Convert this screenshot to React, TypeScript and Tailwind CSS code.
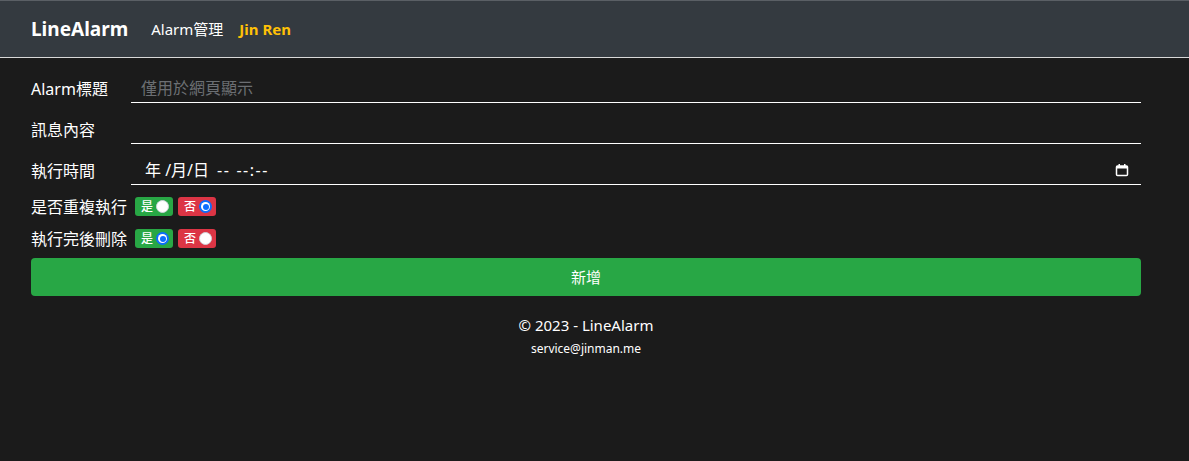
import { useState } from 'react';

const font = { fontFamily: '"Noto Sans", "Noto Sans CJK TC", sans-serif' };

function Radio({ checked }: { checked: boolean }) {
  return checked ? (
    <span className="w-[13px] h-[13px] rounded-full bg-[#0d6efd] flex items-center justify-center">
      <span className="w-[9px] h-[9px] rounded-full bg-white flex items-center justify-center">
        <span className="w-[6px] h-[6px] rounded-full bg-[#0d6efd]" />
      </span>
    </span>
  ) : (
    <span className="w-[13px] h-[13px] rounded-full bg-white border border-gray-300" />
  );
}

function Choice({ label, color, checked, onClick }: { label: string; color: string; checked: boolean; onClick: () => void }) {
  return (
    <button
      onClick={onClick}
      className={`${color} h-[19px] w-[38px] rounded-[3px] flex items-center gap-[3px] pl-[6px] text-white text-[12px] font-medium leading-none`}
    >
      {label}
      <Radio checked={checked} />
    </button>
  );
}

function Toggle({ label, value, onChange }: { label: string; value: boolean; onChange: (v: boolean) => void }) {
  return (
    <div className="flex items-center h-[21px]">
      <span className="text-[16px] text-white mr-[8px]">{label}</span>
      <div className="flex gap-[5px]">
        <Choice label="是" color="bg-[#28a745]" checked={value} onClick={() => onChange(true)} />
        <Choice label="否" color="bg-[#dc3545]" checked={!value} onClick={() => onChange(false)} />
      </div>
    </div>
  );
}

export default function App() {
  const [repeat, setRepeat] = useState(false);
  const [remove, setRemove] = useState(true);

  return (
    <div className="min-h-[461px] bg-[#1b1b1b] text-white" style={font}>
      {/* Navbar */}
      <nav className="h-[58px] bg-[#343a40] border-t border-[#5a5f65] border-b border-b-[#d8d8d8] flex items-center px-[31px]">
        <span className="text-[19px] font-bold text-white mr-[23px]">LineAlarm</span>
        <span className="text-[15px] text-white mr-[16px]">Alarm管理</span>
        <span className="text-[15px] font-bold text-[#ffc107]">Jin Ren</span>
      </nav>

      <div className="w-[1172px]">
        {/* Form */}
        <div className="px-[31px] pt-[17px]">
          <div className="flex items-center h-[28px]">
            <span className="w-[100px] text-[16px]">Alarm標題</span>
            <input
              placeholder="僅用於網頁顯示"
              className="flex-1 bg-transparent border-b border-white h-full outline-none text-[16px] px-[10px] pb-[2px] placeholder:text-[#6c6f73]"
            />
          </div>
          <div className="flex items-center h-[29px] mt-[12px]">
            <span className="w-[100px] text-[16px]">訊息內容</span>
            <input className="flex-1 bg-transparent border-b border-white h-full outline-none text-[16px] px-[10px]" />
          </div>
          <div className="flex items-center h-[29px] mt-[12px]">
            <span className="w-[100px] text-[16px]">執行時間</span>
            <div className="flex-1 border-b border-white h-full flex items-center justify-between pl-[14px] pr-[12px] text-[16px]">
              <span className="flex items-center">
                年 /月/日
                <span className="ml-[8px] tracking-[1.5px]">--</span>
                <span className="ml-[6px] tracking-[1.5px]">--:--</span>
              </span>
              <svg width="14" height="14" viewBox="0 0 14 14">
                <rect x="1.5" y="3" width="11" height="9.5" rx="1" fill="none" stroke="white" strokeWidth="1.5" />
                <rect x="1.5" y="3" width="11" height="2.5" fill="white" />
                <rect x="3.5" y="1" width="1.5" height="2.5" fill="white" />
                <rect x="9" y="1" width="1.5" height="2.5" fill="white" />
              </svg>
            </div>
          </div>
          <div className="mt-[11px] flex flex-col gap-[11px]">
            <Toggle label="是否重複執行" value={repeat} onChange={setRepeat} />
            <Toggle label="執行完後刪除" value={remove} onChange={setRemove} />
          </div>
          <button className="mt-[9px] w-full h-[38px] rounded-[4px] bg-[#28a745] text-white text-[15px]">新增</button>
        </div>

        {/* Footer */}
        <footer className="flex flex-col items-center mt-[18px]">
          <span className="text-[15px] leading-[22px]">© 2023 - LineAlarm</span>
          <span className="text-[12px] mt-[4px]">service@jinman.me</span>
        </footer>
      </div>
    </div>
  );
}
